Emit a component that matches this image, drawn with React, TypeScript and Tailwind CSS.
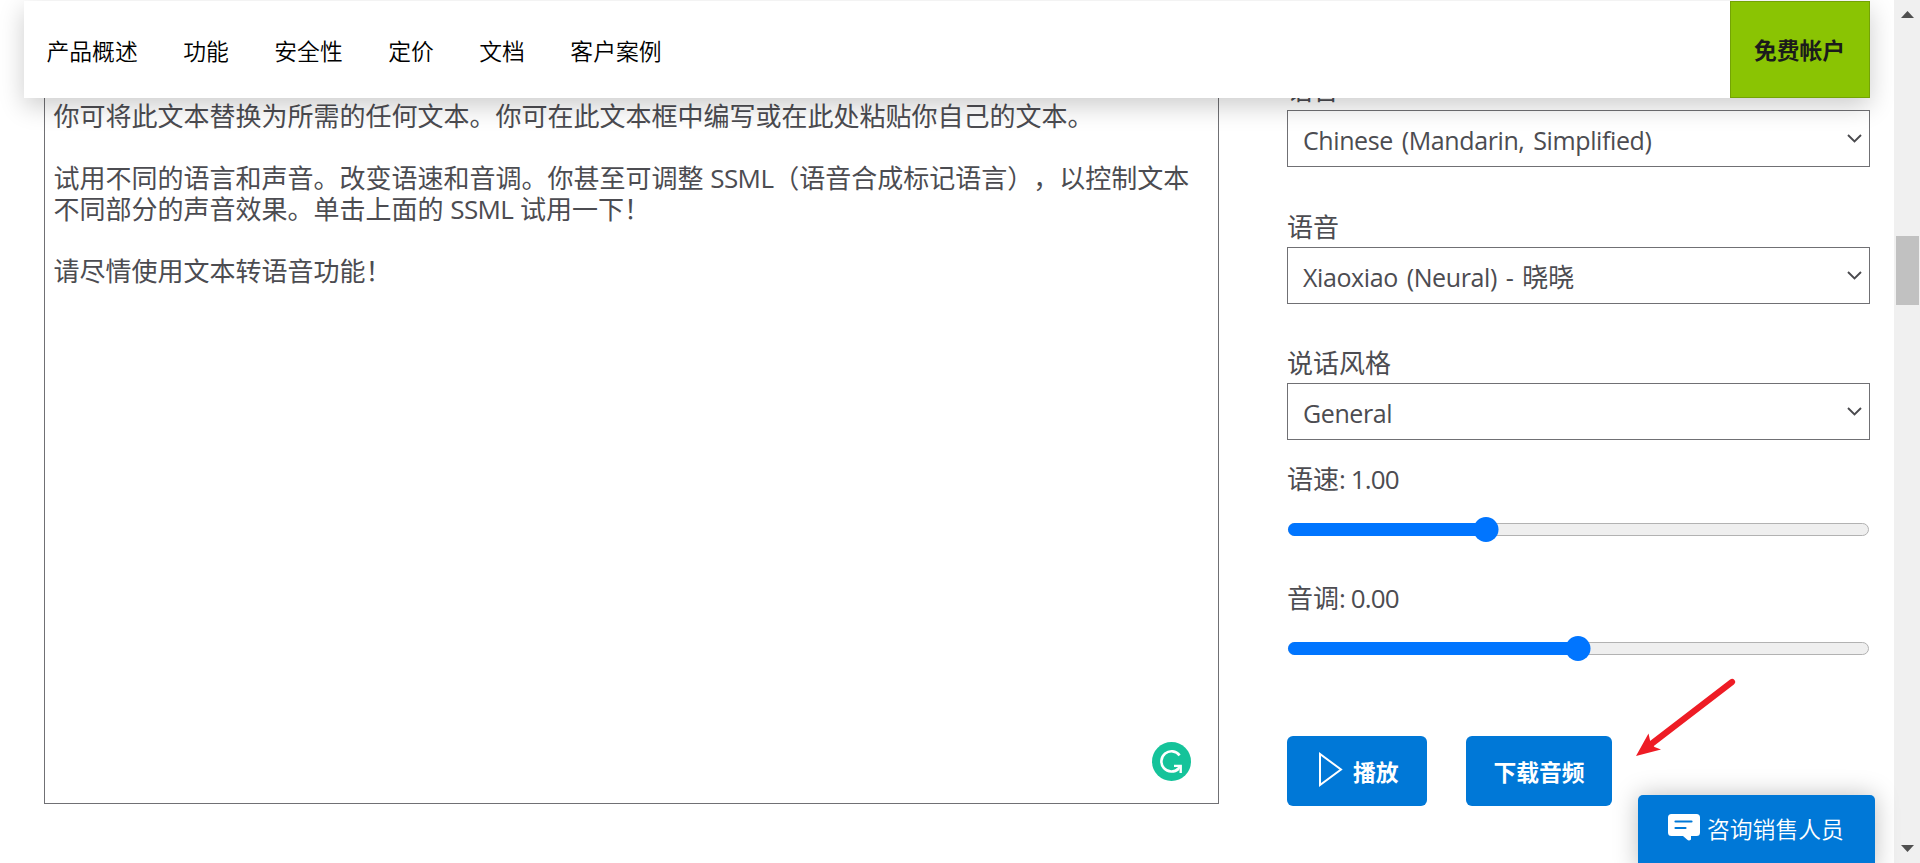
import type { ReactNode } from "react";

const navItems = ["产品概述", "功能", "安全性", "定价", "文档", "客户案例"];

function Latin({ children }: { children: ReactNode }) {
  return <span className="text-[25px] tracking-[-0.4px] [word-spacing:2.8px]">{children}</span>;
}

function Field({ label, children, className = "" }: { label: string; children: ReactNode; className?: string }) {
  return (
    <div className={className}>
      <div className="flex h-[42px] items-center pt-[2px]">{label}</div>
      <button
        type="button"
        className="flex h-[57px] w-full items-center justify-between border border-[#707074] bg-white pr-[7px] pl-[15px] text-left"
      >
        <span className="pt-[3px] whitespace-nowrap">{children}</span>
        <svg width="15" height="9" viewBox="0 0 15 9" fill="none" stroke="#4a4a4e" strokeWidth="1.9">
          <path d="M1 1l6.5 6.5L14 1" />
        </svg>
      </button>
    </div>
  );
}

function Slider({ percent }: { percent: number }) {
  return (
    <div className="relative mx-px flex h-[25px] items-center">
      <div className="h-[13px] w-full overflow-hidden rounded-full border border-[#b2b2b2] bg-[#efefef]" />
      <div
        className="absolute top-[6px] left-0 h-[13px] rounded-l-full bg-[#0075ff]"
        style={{ width: `${percent}%` }}
      />
      <div
        className="absolute top-0 size-[25px] -translate-x-1/2 rounded-full bg-[#0075ff]"
        style={{ left: `${percent}%` }}
      />
    </div>
  );
}

export default function App() {
  return (
    <div className="relative flex h-[863px] w-[1920px] overflow-hidden bg-white font-['Open_Sans','Noto_Sans_CJK_SC',sans-serif] text-[26px] leading-[31px] text-[#4c4c51] [text-spacing-trim:space-all]">
      <div className="w-[1894px] overflow-hidden pt-px">
        <header className="relative z-10 ml-6 flex h-[97px] w-[1846px] items-center justify-between bg-white shadow-[0_8px_24px_rgba(0,0,0,0.2)]">
          <nav className="flex gap-[45.5px] pt-[2px] pl-[22.5px] font-['Noto_Sans_CJK_SC_DemiLight','Noto_Sans_CJK_SC',sans-serif] text-[22.8px] font-[350] text-black">
            {navItems.map((item) => (
              <a key={item} href="#" className="whitespace-nowrap">
                {item}
              </a>
            ))}
          </nav>
          <a
            href="#"
            className="flex h-[97px] w-[140px] items-center justify-center border border-[#74a304] bg-[#8ac403] pt-[2px] pr-px text-[22.8px] font-bold text-[#1b1b1b]"
          >
            免费帐户
          </a>
        </header>

        <main className="-mt-[30px] flex">
          <div className="relative ml-11 h-[736px] w-[1175px] border border-[#707074] pt-[32px] pl-[8.5px] whitespace-nowrap">
            <p>你可将此文本替换为所需的任何文本。你可在此文本框中编写或在此处粘贴你自己的文本。</p>
            <p className="mt-[31px]">
              试用不同的语言和声音。改变语速和音调。你甚至可调整{" "}
              <span className="tracking-[-0.6px]">SSML</span>（语音合成标记语言），以控制文本
            </p>
            <p>
              不同部分的声音效果。单击上面的 <span className="tracking-[-0.6px]">SSML</span> 试用一下！
            </p>
            <p className="mt-[31px]">请尽情使用文本转语音功能！</p>
            <svg className="absolute right-[27px] bottom-[22px]" width="39" height="39" viewBox="0 0 39 39" fill="none">
              <circle cx="19.5" cy="19.5" r="19.5" fill="#15c39a" />
              <path d="M27.6 13.4A10.1 10.1 0 1 0 26.500 26.700" stroke="#fff" strokeWidth="2.6" />
              <path d="M22 23.900h6.700v7" stroke="#fff" strokeWidth="2.4" />
              <path d="M28.500 24l-3.500 4" stroke="#fff" strokeWidth="2.6" />
            </svg>
          </div>

          <div className="ml-[68px] w-[583px]">
            <Field label="语言">
              <Latin>Chinese (Mandarin, Simplified)</Latin>
            </Field>
            <Field label="语音" className="mt-[38px]">
              <Latin>Xiaoxiao (Neural) - </Latin>晓晓
            </Field>
            <Field label="说话风格" className="mt-[37px]">
              <Latin>General</Latin>
            </Field>
            <div className="mt-[19px] mb-[18px] flex h-10 items-center whitespace-pre">
              语速<span className="tracking-[-0.9px]">: 1.00</span>
            </div>
            <Slider percent={34.1} />
            <div className="mt-9 mb-[18px] flex h-10 items-center whitespace-pre">
              音调<span className="tracking-[-0.9px]">: 0.00</span>
            </div>
            <Slider percent={49.9} />
            <div className="mt-[75px] flex gap-[39px] text-[22.8px] font-bold text-white">
              <button type="button" className="flex h-[70px] w-[140px] items-center rounded-md bg-[#0078d7] pl-[31px]">
                <svg width="25" height="42" viewBox="0 0 25 42" fill="none" stroke="#fff" strokeWidth="2">
                  <path d="M2 4v31L23 19.500z" />
                </svg>
                <span className="pt-[2px] pl-[10px]">播放</span>
              </button>
              <button type="button" className="flex h-[70px] w-[146px] items-center justify-center rounded-md bg-[#0078d7] pt-[2px]">
                下载音频
              </button>
            </div>
          </div>
        </main>
      </div>

      <div className="flex w-[26px] flex-col items-center justify-between bg-[#f0f0f0] pt-[11px] pb-[11px]">
        <svg width="13" height="7" viewBox="0 0 13 7" fill="#505050">
          <path d="M0 7L6.5 0 13 7z" />
        </svg>
        <div className="mt-[218px] mb-auto h-[69px] w-[23px] bg-[#c1c1c1]" />
        <svg width="13" height="7" viewBox="0 0 13 7" fill="#505050">
          <path d="M0 0h13L6.5 7z" />
        </svg>
      </div>

      <svg className="absolute top-[676px] left-[1630px]" width="110" height="86" viewBox="0 0 110 86">
        <path d="M102 6L18 70.500" stroke="#ee1c25" strokeWidth="6.2" strokeLinecap="round" fill="none" />
        <path d="M6 80L18.500 57.500 20.500 66.500 24.500 71 31 73.500z" fill="#ee1c25" />
      </svg>

      <a
        href="#"
        className="absolute top-[795px] left-[1638px] flex h-[76px] w-[237px] rounded-t-[5px] bg-[#0078d7] pt-[19px] pl-[30px] text-[22.8px] text-white shadow-[0_0_24px_rgba(0,0,0,0.25)]"
      >
        <svg width="32" height="28" viewBox="0 0 32 28" fill="none">
          <path
            d="M3.500 0h25A3.500 3.500 0 0 1 32 3.500v15A3.500 3.500 0 0 1 28.500 22H23v3.500q-2 2-4 0L15 22H3.500A3.500 3.500 0 0 1 0 18.500v-15A3.500 3.500 0 0 1 3.500 0z"
            fill="#fff"
          />
          <path d="M7.500 7.500h16M7.500 14h10" stroke="#0078d7" strokeWidth="2.200" strokeLinecap="round" />
        </svg>
        <span className="pl-[7px] font-[350] whitespace-nowrap">咨询销售人员</span>
      </a>
    </div>
  );
}
